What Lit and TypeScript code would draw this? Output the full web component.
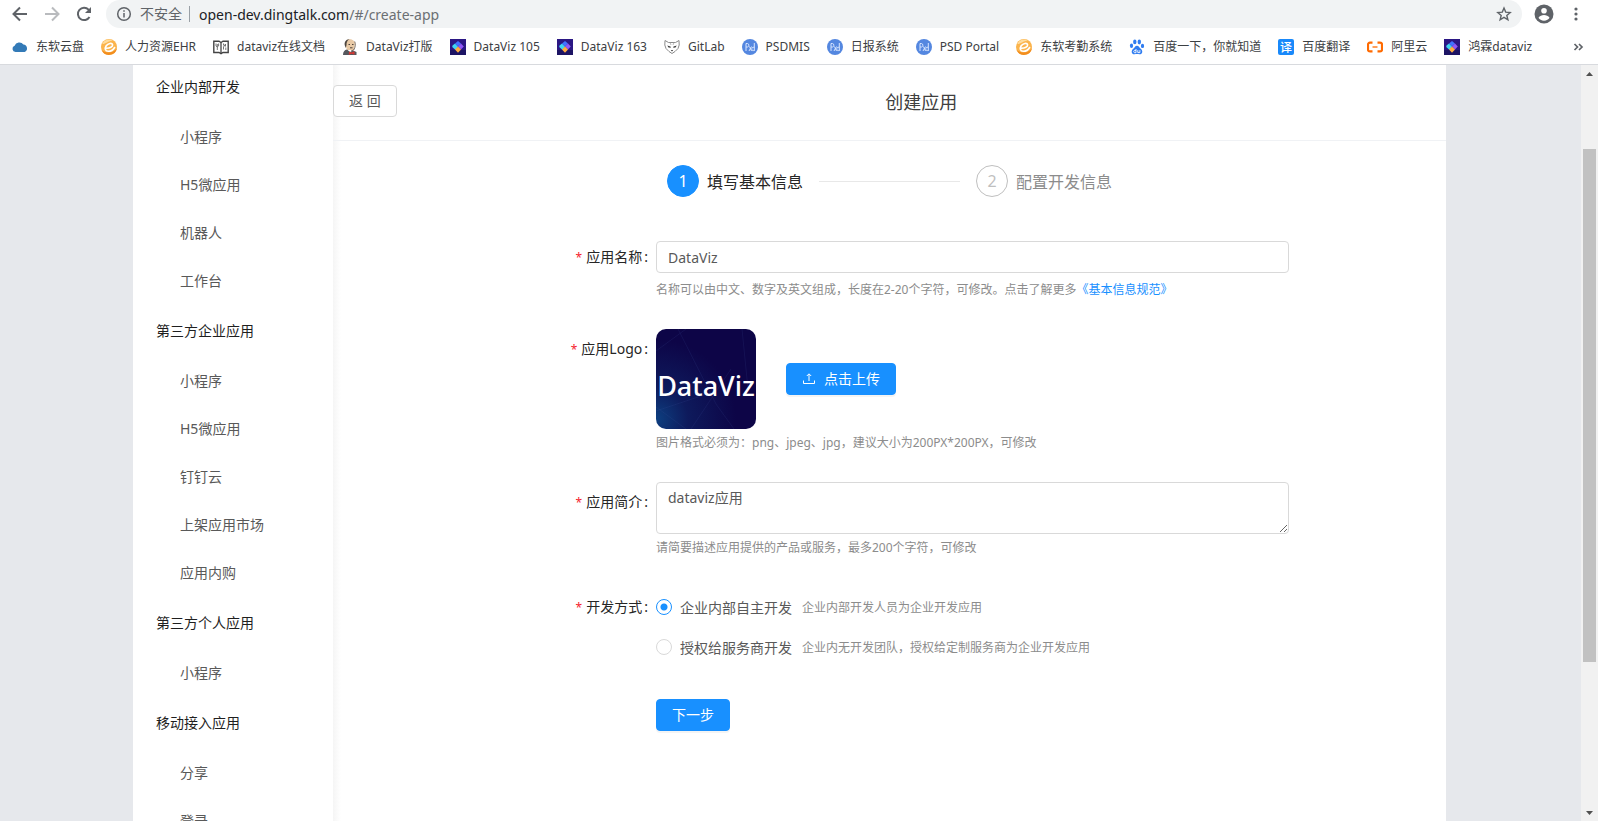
import { LitElement, html, svg, css } from "lit";
import { customElement, state } from "lit/decorators.js";

const cube = svg`
  <rect width="16" height="16" fill="#2b1784"/>
  <path d="M0 11H16V16H0Z" fill="#1d1464"/>
  <path d="M2.500 6.500 5 4.500 8 7.500 6 10.500 5 10.500 2.200 8Z" fill="#3fd6f2"/>
  <path d="M5 4.500 8 2 11 4.500 8 7.500Z" fill="#4173ff"/>
  <path d="M11 4.500 13.800 7.500 11 10.500 8 7.500Z" fill="#9257f8"/>
  <path d="M8 7.500 11 10.500 8 13.800 5 10.500Z" fill="#ffac40"/>`;

const ehr = svg`
  <circle cx="8" cy="8" r="8" fill="#fbb44c"/>
  <path d="M.6 11A8 8 0 0 0 15.900 9C13 14 5 15 .6 11Z" fill="#f28d1e"/>
  <path d="M1.200 5A7.500 7.500 0 0 1 12 1.500C7 2 4 5.500 1.200 5Z" fill="#ffdc9c"/>
  <path d="M4.500 9.200C9 9.500 12 7.500 11.600 5.600 11 3.500 7 4.200 5.200 6.800 3.500 9.500 4.200 12.200 7.200 12.300 10 12.300 12.500 10.500 13.600 8.500" fill="none" stroke="#fff" stroke-width="1.600" stroke-linecap="round"/>`;

const psd = svg`
  <circle cx="8" cy="8" r="8" fill="#5487e0"/>
  <path d="M4 12V4.500H5.500A1.800 1.800 0 0 1 5.500 8H4M7.500 7.500 9.500 12M9.500 7.500 7 12M12.300 4V12M12.300 8.500C10.500 7.500 9.600 9 9.800 10.300 10 12 11.500 12 12.300 11" fill="none" stroke="#d5e4ff" stroke-width="1"/>`;

const glyphs: Record<string, unknown> = {
  cube,
  ehr,
  psd,
  cloud: svg`<path d="M3.500 13A3.200 3.200 0 0 1 2.600 6.800 5 5 0 0 1 11.400 5.500 3.900 3.900 0 0 1 12.600 13Z" fill="#337ab7"/>`,
  book: svg`
    <path d="M.8 2.200H6L8 3.500 10 2.200H15.200V13.500H10L8 14.700 6 13.500H.8Z" fill="#fff" stroke="#444" stroke-width="1.400"/>
    <path d="M8 3.500V14.500" stroke="#444" stroke-width="1.300"/>
    <path d="M3 4.500V7L4.300 8 5.600 7V4.500M4.300 5V11M10.500 10.500V8L12.500 5V7.500M12.800 8.500V11M10.500 4.500V6.500" stroke="#666" stroke-width=".9" fill="none"/>`,
  butler: svg`
    <path d="M3.500 6C3 2 5 .3 8 .3S13.200 2.500 12.700 6L11.500 11H5Z" fill="#e8c9a5"/>
    <path d="M3 7C1.800 3 4 0 7.500 .2 5 1.500 4.500 3.500 4.500 6L3.800 9Z" fill="#4d4640"/>
    <path d="M12.700 2.500C13.700 5 13.500 8 11.700 11L9 12" stroke="#5b4a3c" stroke-width=".8" fill="none"/>
    <path d="M1 16C1 12.500 2.500 11 5 10.500L8 13 11 11.500 14.500 13V16Z" fill="#55585e"/>
    <path d="M7 12.500 9.500 13.500 12.500 12.300V15.800L9.500 14.700 6.800 16Z" fill="#d33833"/>
    <path d="M6.500 5.500H8M10 5.500H11.500M8 8.800H10.500" stroke="#3a322c" stroke-width=".9"/>`,
  raccoon: svg`
    <path d="M1 1.500 4.500 3.500H11.500L15 1.500 15.200 6 14 9.500 11 12.500 8 14.500 5 12.500 2 9.500 .8 6Z" fill="#fff" stroke="#8b8b8b" stroke-width="1"/>
    <path d="M3.300 6.500 6.500 7.500 6.800 8.800 4.500 8.600ZM12.700 6.500 9.500 7.500 9.200 8.800 11.500 8.600Z" fill="#3c3c3c"/>
    <path d="M6 3.500 7 6M10 3.500 9 6" stroke="#aaa" stroke-width=".8"/>
    <path d="M6.800 11H9.200L8 12.600Z" fill="#333"/>`,
  paw: svg`
    <g fill="#2f7cf0">
      <ellipse cx="5.800" cy="2.900" rx="1.700" ry="2.400"/>
      <ellipse cx="10.300" cy="3" rx="1.700" ry="2.400"/>
      <ellipse cx="2.500" cy="6.700" rx="1.600" ry="2.200"/>
      <ellipse cx="13.500" cy="6.900" rx="1.600" ry="2.200"/>
      <path d="M8 6.700C10 6.700 10.300 8.700 12 10 14.300 12 13.300 15.500 10.500 15.300 8.700 15 7.300 15 5.500 15.300 2.700 15.500 1.700 12 4 10 5.700 8.700 6 6.700 8 6.700Z"/>
    </g>
    <path d="M7 10V13.700H5.600A1.200 1.200 0 0 1 5.600 11.400H7M8.800 11.200V13.600H10.900V11.200" stroke="#fff" stroke-width=".9" fill="none"/>`,
  translate: svg`
    <rect width="16" height="16" rx="2" fill="#1989fa"/>
    <text x="8" y="12.500" text-anchor="middle" font-size="12" font-weight="500" font-family="Noto Sans CJK SC, sans-serif" fill="#fff">译</text>`,
  aliyun: svg`
    <path d="M5.500 3.600H3A2 2 0 0 0 1 5.600V10.400A2 2 0 0 0 3 12.400H5.500M10.500 3.600H13A2 2 0 0 1 15 5.600V10.400A2 2 0 0 1 13 12.400H10.500" fill="none" stroke="#ff6a00" stroke-width="2.200"/>
    <path d="M5.500 8H10.500" stroke="#ff6a00" stroke-width="1.300"/>`,
};

const bookmarks: [string, string][] = [
  ["cloud", "东软云盘"],
  ["ehr", "人力资源EHR"],
  ["book", "dataviz在线文档"],
  ["butler", "DataViz打版"],
  ["cube", "DataViz 105"],
  ["cube", "DataViz 163"],
  ["raccoon", "GitLab"],
  ["psd", "PSDMIS"],
  ["psd", "日报系统"],
  ["psd", "PSD Portal"],
  ["ehr", "东软考勤系统"],
  ["paw", "百度一下，你就知道"],
  ["translate", "百度翻译"],
  ["aliyun", "阿里云"],
  ["cube", "鸿霖dataviz"],
];

const menu: { title: string; items: string[] }[] = [
  { title: "企业内部开发", items: ["小程序", "H5微应用", "机器人", "工作台"] },
  { title: "第三方企业应用", items: ["小程序", "H5微应用", "钉钉云", "上架应用市场", "应用内购"] },
  { title: "第三方个人应用", items: ["小程序"] },
  { title: "移动接入应用", items: ["分享", "登录"] },
];

const modes = [
  { id: "self", name: "企业内部自主开发", note: "企业内部开发人员为企业开发应用" },
  { id: "vendor", name: "授权给服务商开发", note: "企业内无开发团队，授权给定制服务商为企业开发应用" },
];

@customElement("browser-bar")
class BrowserBar extends LitElement {
  static styles = css`
    :host { display: block; border-bottom: 1px solid #d8dade; background: #fff; }
    button { border: 0; padding: 0; background: none; display: flex; color: #5f6368; }
    svg { display: block; flex: none; }
    .tools { display: flex; align-items: center; height: 28px; padding: 0 14px 0 10px; }
    .nav { display: flex; gap: 12px; }
    .nav .off { color: #b9bbbe; }
    .address {
      flex: 1; display: flex; align-items: center; height: 28px; margin: 0 12px;
      padding: 0 10px; border-radius: 14px; background: #f1f3f4; font-size: 14px; color: #5f6368;
    }
    .warn { margin-left: 8px; padding-right: 7px; line-height: 16px; border-right: 1px solid #9aa0a6; }
    .url { flex: 1; margin-left: 9px; outline: 0; white-space: nowrap; color: #6b6f73; }
    .host { color: #202124; }
    .more { margin-left: 14px; }
    .marks { display: flex; align-items: center; height: 34px; padding: 2px 12px 0; gap: 17px; }
    .mark {
      display: flex; align-items: center; gap: 8px; font-size: 12px; line-height: 16px;
      color: #3c4043; text-decoration: none; white-space: nowrap;
    }
    .rest { margin-left: auto; }
  `;

  render() {
    return html`
      <div class="tools">
        <div class="nav">
          <button aria-label="后退"><svg width="20" height="20" viewBox="0 0 20 20" fill="none" stroke="currentColor" stroke-width="2"><path d="M17 10H4M10 3.500 3.500 10 10 16.500"/></svg></button>
          <button class="off" aria-label="前进"><svg width="20" height="20" viewBox="0 0 20 20" fill="none" stroke="currentColor" stroke-width="2"><path d="M3 10H16M10 3.500 16.500 10 10 16.500"/></svg></button>
          <button aria-label="刷新"><svg width="20" height="20" viewBox="0 0 20 20" fill="none" stroke="currentColor" stroke-width="2"><path d="M15.500 13A6.200 6.200 0 1 1 14.600 5.600L16 7"/><path d="M17 3V9H11Z" fill="currentColor" stroke="none"/></svg></button>
        </div>
        <div class="address">
          <svg width="16" height="16" viewBox="0 0 16 16" fill="none" stroke="currentColor" stroke-width="1.500"><circle cx="8" cy="8" r="6.300"/><path d="M8 7V11.500M8 4.300V5.800"/></svg>
          <span class="warn">不安全</span>
          <div class="url" role="textbox" aria-label="地址"><span class="host">open-dev.dingtalk.com</span>/#/create-app</div>
          <button aria-label="收藏"><svg width="16" height="16" viewBox="0 0 16 16" fill="none" stroke="currentColor" stroke-width="1.400"><path d="M8 2 9.700 6.100 14.200 6.500 10.800 9.400 11.900 13.800 8 11.400 4.100 13.800 5.200 9.400 1.800 6.500 6.300 6.100Z"/></svg></button>
        </div>
        <button aria-label="用户"><svg width="20" height="20" viewBox="0 0 20 20"><circle cx="10" cy="10" r="9.500" fill="#5f6368"/><circle cx="10" cy="6.700" r="2.800" fill="#fff"/><path d="M4.500 13.800C5.500 11.800 8 11 10 11S14.500 11.800 15.500 13.800C14.500 15.500 12.500 16.700 10 16.700S5.500 15.500 4.500 13.800Z" fill="#fff"/></svg></button>
        <button class="more" aria-label="菜单"><svg width="16" height="16" viewBox="0 0 16 16" fill="#5f6368"><circle cx="8" cy="3" r="1.600"/><circle cx="8" cy="8" r="1.600"/><circle cx="8" cy="13" r="1.600"/></svg></button>
      </div>
      <div class="marks">
        ${bookmarks.map(
          ([icon, name]) => html`<a class="mark" href="#"><svg width="16" height="16" viewBox="0 0 16 16">${glyphs[icon]}</svg>${name}</a>`
        )}
        <button class="rest" aria-label="更多书签"><svg width="16" height="16" viewBox="0 0 16 16" fill="none" stroke="currentColor" stroke-width="1.700"><path d="M4.500 5 7.500 8 4.500 11M9 5 12 8 9 11"/></svg></button>
      </div>`;
  }
}

@customElement("side-menu")
class SideMenu extends LitElement {
  static styles = css`
    :host { display: block; width: 200px; flex: none; background: #fff; }
    .head { margin: 0; padding-left: 23px; font-size: 14px; font-weight: 400; line-height: 52px; color: #1f1f1f; }
    ul { list-style: none; margin: 0; padding: 0; }
    .link { display: block; padding-left: 47px; font-size: 14px; line-height: 48px; color: #595959; text-decoration: none; }
    nav { margin-top: -4px; }
  `;

  render() {
    return html`<nav>
      ${menu.map(
        (g) => html`
          <h2 class="head">${g.title}</h2>
          <ul>${g.items.map((i) => html`<li><a class="link" href="#">${i}</a></li>`)}</ul>`
      )}
    </nav>`;
  }
}

@customElement("create-app-form")
class CreateAppForm extends LitElement {
  @state() private mode = "self";

  static styles = css`
    :host {
      display: block; flex: 1; min-width: 0; font-size: 14px; color: #595959;
      background: linear-gradient(90deg, #f5f5f5, #fff 8px);
    }
    * { box-sizing: border-box; }
    button, input, textarea { font: inherit; }
    header { display: flex; align-items: center; height: 76px; padding-bottom: 4px; border-bottom: 1px solid #f0f2f5; }
    h1 { flex: 1; margin: 0; text-align: center; font-size: 18px; font-weight: 400; color: #404040; }
    .btn { height: 32px; padding: 0 15px; border: 1px solid #d9d9d9; border-radius: 4px; background: #fff; color: #595959; line-height: 30px; }
    .primary { border-color: #1890ff; background: #1890ff; color: #fff; box-shadow: 0 2px 0 rgba(0, 0, 0, 0.045); }
    .steps { display: flex; align-items: center; list-style: none; margin: 24px 0 0; padding: 0 334px; font-size: 16px; white-space: nowrap; }
    .step { display: flex; align-items: center; gap: 8px; color: #8c8c8c; }
    .num { width: 32px; height: 32px; border: 1px solid #bfbfbf; border-radius: 50%; line-height: 30px; text-align: center; color: #bfbfbf; }
    .now { color: #262626; }
    .now .num { background: #1890ff; border-color: #1890ff; color: #fff; }
    .rail { flex: 1; height: 1px; margin: 0 16px; background: #e8e8e8; }
    form { display: flex; flex-direction: column; gap: 30px; margin-top: 44px; padding-right: 157px; }
    .row { display: grid; grid-template-columns: 323px 1fr; }
    .label { padding-right: 8px; text-align: right; line-height: 40px; color: #262626; }
    .label::before { content: "*"; margin-right: 4px; font-size: 12px; color: #f5222d; }
    .label::after { content: ":"; margin-left: 2px; }
    .short { line-height: 32px; }
    .field { display: block; width: 100%; border: 1px solid #d9d9d9; border-radius: 4px; background: #fff; color: #595959; outline: 0; }
    .text { height: 32px; padding: 4px 11px; }
    .area { height: 52px; padding: 4px 11px; line-height: 22px; resize: vertical; }
    .hint { margin: 5px 0 0; font-size: 12px; line-height: 18px; color: #8c8c8c; }
    .lower { margin-top: 8px; }
    .hint a { color: #1890ff; text-decoration: none; }
    .media { display: flex; align-items: center; gap: 30px; }
    .media svg { display: block; }
    .logo { border-radius: 10px; }
    .upload { display: flex; align-items: center; gap: 8px; }
    .modes { padding-bottom: 2px; }
    .mode { display: flex; align-items: center; gap: 8px; height: 40px; }
    .mode input {
      appearance: none; width: 16px; height: 16px; margin: 0; border: 1px solid #d9d9d9; border-radius: 50%; background: #fff;
    }
    .mode input:checked { border-color: #1890ff; background: radial-gradient(circle, #1890ff 3px, #fff 4px); }
    .note { margin-left: 2px; font-size: 12px; color: #8c8c8c; }
    .go { justify-self: start; grid-column: 2; }
  `;

  render() {
    return html`
      <header>
        <button class="btn">返 回</button>
        <h1>创建应用</h1>
      </header>
      <ol class="steps">
        <li class="step now"><span class="num">1</span>填写基本信息</li>
        <li class="rail" role="presentation"></li>
        <li class="step"><span class="num">2</span>配置开发信息</li>
      </ol>
      <form @submit=${(e: Event) => e.preventDefault()}>
        <div class="row">
          <label class="label short" for="name">应用名称</label>
          <div>
            <input id="name" class="field text" type="text" value="DataViz" />
            <p class="hint lower">名称可以由中文、数字及英文组成，长度在2-20个字符，可修改。点击了解更多<a href="#">《基本信息规范》</a></p>
          </div>
        </div>
        <div class="row">
          <label class="label" for="logo">应用Logo</label>
          <div>
            <div class="media">
              <svg class="logo" width="100" height="100" viewBox="0 0 100 100" role="img" aria-label="DataViz">
                <defs>
                  <radialGradient id="glow" cx="0" cy="0.9" r="0.8">
                    <stop offset="0" stop-color="#0d3f80"/>
                    <stop offset="0.4" stop-color="#0e1a5c"/>
                    <stop offset="1" stop-color="#0d0547"/>
                  </radialGradient>
                </defs>
                <rect width="100" height="100" fill="url(#glow)"/>
                <path d="M22 0 60 75 78 100M0 22 30 0M86 0 92 60M75 40 35 100M0 82 60 62M0 78 30 100" fill="none" stroke="#4b5ca8" stroke-opacity="0.2" stroke-width="0.700"/>
                <text x="50" y="67" text-anchor="middle" font-size="27" font-weight="500" fill="#fff">DataViz</text>
              </svg>
              <button id="logo" class="btn primary upload" type="button">
                <svg width="14" height="14" viewBox="0 0 14 14" fill="none" stroke="#fff" stroke-width="1"><path d="M1.500 8.500V11.500H12.500V8.500M7 9V2M4.800 4 7 1.800 9.200 4"/></svg>点击上传
              </button>
            </div>
            <p class="hint">图片格式必须为：png、jpeg、jpg，建议大小为200PX*200PX，可修改</p>
          </div>
        </div>
        <div class="row">
          <label class="label" for="intro">应用简介</label>
          <div>
            <textarea id="intro" class="field area" .value=${"dataviz应用"}></textarea>
            <p class="hint">请简要描述应用提供的产品或服务，最多200个字符，可修改</p>
          </div>
        </div>
        <div class="row" role="radiogroup" aria-labelledby="mode">
          <span id="mode" class="label">开发方式</span>
          <div class="modes">
            ${modes.map(
              (m) => html`<label class="mode">
                <input type="radio" name="mode" .checked=${this.mode === m.id} @change=${() => (this.mode = m.id)} />
                <span>${m.name}</span><span class="note">${m.note}</span>
              </label>`
            )}
          </div>
        </div>
        <div class="row"><button class="btn primary go">下一步</button></div>
      </form>`;
  }
}

@customElement("app-root")
class AppRoot extends LitElement {
  static styles = css`
    :host {
      display: flex; flex-direction: column; height: 100vh; overflow: hidden;
      font-family: "Noto Sans", "Noto Sans CJK SC", sans-serif;
    }
    .view { flex: 1; min-height: 0; display: flex; background: #e6e8ec; }
    .page { flex: 1; min-width: 0; display: flex; margin: 0 135px 0 133px; overflow: hidden; background: #fff; }
    .scroll { width: 17px; flex: none; display: flex; flex-direction: column; align-items: center; background: #f1f1f1; }
    .scroll svg { display: block; flex: none; }
    .track { flex: 1; width: 13px; display: grid; grid-template-rows: 67fr 513fr 142fr; }
    .thumb { grid-row: 2; background: #c1c1c1; }
  `;

  render() {
    return html`
      <browser-bar></browser-bar>
      <div class="view">
        <main class="page">
          <side-menu></side-menu>
          <create-app-form></create-app-form>
        </main>
        <div class="scroll" aria-hidden="true">
          <svg width="17" height="17" viewBox="0 0 17 17"><path d="M5 11 8.500 7 12 11Z" fill="#505050"/></svg>
          <div class="track"><div class="thumb"></div></div>
          <svg width="17" height="17" viewBox="0 0 17 17"><path d="M5 7 8.500 11 12 7Z" fill="#505050"/></svg>
        </div>
      </div>`;
  }
}
